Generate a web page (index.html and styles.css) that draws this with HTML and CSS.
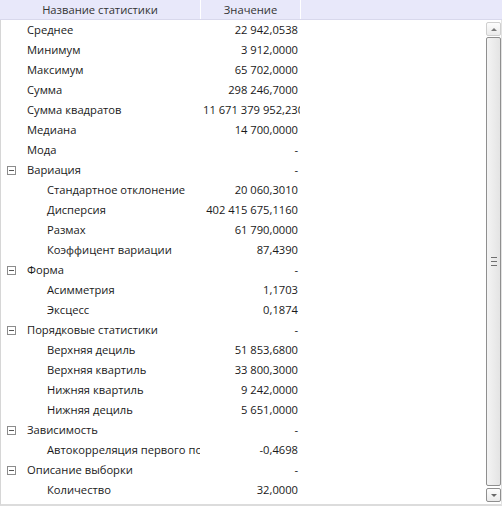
FILE: index.html
```html
<!DOCTYPE html>
<html lang="ru">
<head>
<meta charset="utf-8">
<link rel="stylesheet" href="styles.css">
</head>
<body>
<div class="grid">
  <div class="head">
    <div class="hcell name">Название статистики</div>
    <div class="hcell val">Значение</div>
    <div class="hcell rest"></div>
  </div>
  <div class="body">
    <div class="rows">
      <div class="row"><div class="c1 l0">Среднее</div><div class="c2">22 942,0538</div></div>
      <div class="row"><div class="c1 l0">Минимум</div><div class="c2">3 912,0000</div></div>
      <div class="row"><div class="c1 l0">Максимум</div><div class="c2">65 702,0000</div></div>
      <div class="row"><div class="c1 l0">Сумма</div><div class="c2">298 246,7000</div></div>
      <div class="row"><div class="c1 l0">Сумма квадратов</div><div class="c2">11 671 379 952,2300</div></div>
      <div class="row"><div class="c1 l0">Медиана</div><div class="c2">14 700,0000</div></div>
      <div class="row"><div class="c1 l0">Мода</div><div class="c2">-</div></div>
      <div class="row"><div class="c1 l0"><span class="exp"></span>Вариация</div><div class="c2">-</div></div>
      <div class="row"><div class="c1 l1">Стандартное отклонение</div><div class="c2">20 060,3010</div></div>
      <div class="row"><div class="c1 l1">Дисперсия</div><div class="c2">402 415 675,1160</div></div>
      <div class="row"><div class="c1 l1">Размах</div><div class="c2">61 790,0000</div></div>
      <div class="row"><div class="c1 l1">Коэффицент вариации</div><div class="c2">87,4390</div></div>
      <div class="row"><div class="c1 l0"><span class="exp"></span>Форма</div><div class="c2">-</div></div>
      <div class="row"><div class="c1 l1">Асимметрия</div><div class="c2">1,1703</div></div>
      <div class="row"><div class="c1 l1">Эксцесс</div><div class="c2">0,1874</div></div>
      <div class="row"><div class="c1 l0"><span class="exp"></span>Порядковые статистики</div><div class="c2">-</div></div>
      <div class="row"><div class="c1 l1">Верхняя дециль</div><div class="c2">51 853,6800</div></div>
      <div class="row"><div class="c1 l1">Верхняя квартиль</div><div class="c2">33 800,3000</div></div>
      <div class="row"><div class="c1 l1">Нижняя квартиль</div><div class="c2">9 242,0000</div></div>
      <div class="row"><div class="c1 l1">Нижняя дециль</div><div class="c2">5 651,0000</div></div>
      <div class="row"><div class="c1 l0"><span class="exp"></span>Зависимость</div><div class="c2">-</div></div>
      <div class="row"><div class="c1 l1">Автокорреляция первого порядка</div><div class="c2">-0,4698</div></div>
      <div class="row"><div class="c1 l0"><span class="exp"></span>Описание выборки</div><div class="c2">-</div></div>
      <div class="row"><div class="c1 l1">Количество</div><div class="c2">32,0000</div></div>
    </div>
    <div class="scroll">
      <div class="sbtn up"><span class="tri-up"></span></div>
      <div class="thumb"><span class="grip"></span><span class="grip"></span><span class="grip"></span></div>
      <div class="sbtn down"><span class="tri-down"></span></div>
    </div>
  </div>
</div>
</body>
</html>
```
FILE: styles.css
```css
* { box-sizing: border-box; }
html, body { margin: 0; padding: 0; background: #fff; }
body {
  font-family: "Open Sans", "Noto Sans", sans-serif;
  font-size: 11.2px;
  color: #1a1a1a;
}
.grid {
  width: 502px;
  height: 507px;
  display: flex;
  flex-direction: column;
  overflow: hidden;
}
.head {
  height: 20px;
  display: flex;
  background: #e8e8fa;
  border-bottom: 1px solid #d8d8ec;
  flex: none;
}
.hcell {
  height: 19px;
  line-height: 19px;
  text-align: center;
  color: #333;
  border-right: 1px solid #fff;
}
.hcell.name { width: 201px; }
.hcell.val { width: 100px; }
.hcell.rest { flex: 1; border-right: none; }
.body {
  flex: 1;
  display: flex;
  border-left: 1px solid #d6d6d6;
  border-bottom: 2px solid #dcdcdc;
  border-right: 1px solid #e2e2e2;
  min-height: 0;
  margin-bottom: 1px;
}
.rows {
  width: 484px;
  overflow: hidden;
}
.row {
  height: 20px;
  display: flex;
  line-height: 20px;
  white-space: nowrap;
}
.c1 {
  width: 199px;
  overflow: hidden;
  position: relative;
}
.c1.l0 { padding-left: 26px; }
.c1.l1 { padding-left: 46px; }
.c2 {
  width: 100px;
  overflow: hidden;
  text-align: right;
  padding: 0 2px 0 3px;
}
.exp {
  position: absolute;
  left: 6px;
  top: 6px;
  width: 9px;
  height: 9px;
  border: 1px solid #8c8c8c;
  background: #fff;
}
.exp::after {
  content: "";
  position: absolute;
  left: 1px;
  top: 3px;
  width: 5px;
  height: 1px;
  background: #555;
}
.scroll {
  width: 15px;
  margin-left: 1px;
  padding-top: 2px;
  padding-bottom: 2px;
  display: flex;
  flex-direction: column;
}
.sbtn {
  height: 14px;
  border: 1px solid #cfcfcf;
  border-radius: 2px;
  background: linear-gradient(#fdfdfd, #ebebeb);
  display: flex;
  align-items: center;
  justify-content: center;
  flex: none;
}
.sbtn.down { border-color: #8f8f8f; }
.tri-up {
  width: 0; height: 0;
  border-left: 3px solid transparent;
  border-right: 3px solid transparent;
  border-bottom: 3px solid #7a7a7a;
}
.tri-down {
  width: 0; height: 0;
  border-left: 3px solid transparent;
  border-right: 3px solid transparent;
  border-top: 3px solid #6a6a6a;
}
.thumb {
  flex: 1;
  margin: 1px 0 2px;
  border: 1px solid #8f8f8f;
  border-radius: 2px;
  background: linear-gradient(90deg, #f4f4f4, #e4e4e4);
  display: flex;
  flex-direction: column;
  align-items: center;
  justify-content: center;
  gap: 3px;
}
.grip {
  width: 6px;
  height: 1px;
  background: #6f6f6f;
}
```
